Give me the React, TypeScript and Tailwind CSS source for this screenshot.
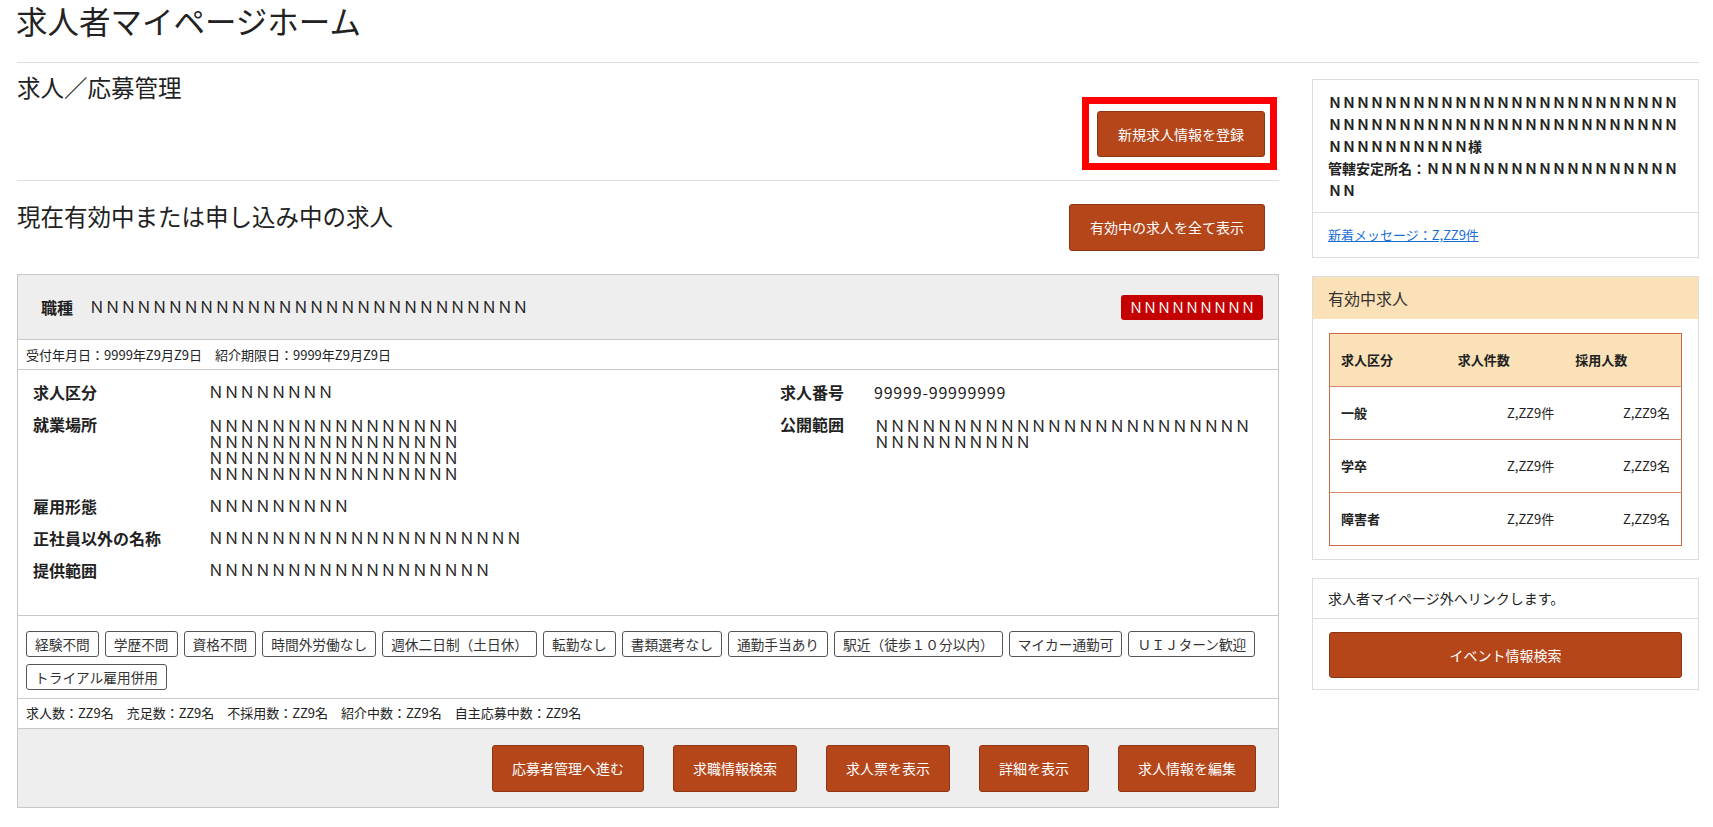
const N = (n: number) => 'Ｎ'.repeat(n);

const btn =
  'inline-flex items-center justify-center rounded-[3px] border border-[#8e3514] bg-[#b4461a] px-[19px] text-[14px] text-white';

const tags = [
  '経験不問',
  '学歴不問',
  '資格不問',
  '時間外労働なし',
  '週休二日制（土日休）',
  '転勤なし',
  '書類選考なし',
  '通勤手当あり',
  '駅近（徒歩１０分以内）',
  'マイカー通勤可',
  'ＵＩＪターン歓迎',
  'トライアル雇用併用',
];

const footerButtons = ['応募者管理へ進む', '求職情報検索', '求人票を表示', '詳細を表示', '求人情報を編集'];

const summary = [
  { kind: '一般', count: 'Z,ZZ9件', hired: 'Z,ZZ9名' },
  { kind: '学卒', count: 'Z,ZZ9件', hired: 'Z,ZZ9名' },
  { kind: '障害者', count: 'Z,ZZ9件', hired: 'Z,ZZ9名' },
];

const App = () => {
  return (
    <div className="min-h-screen bg-white pb-[12px] pl-[17px] pr-[14px] font-['Noto_Sans_CJK_JP',sans-serif] text-[#333]">
      <h1 className="-ml-[1px] text-[31.5px] leading-[40px] text-[#222]">求人者マイページホーム</h1>
      <div className="mt-[22px] border-t border-[#ddd]" />

      <div className="flex gap-[33px]">
        {/* MAIN */}
        <main className="w-[1262px] shrink-0">
          <h2 className="mt-[8px] text-[23.5px] leading-[32px] text-[#222]">求人／応募管理</h2>
          <div className="mt-[8px] flex justify-end pr-[14px]">
            <div className="relative">
              <button className={btn + ' h-[46px] px-[20px]'}>新規求人情報を登録</button>
              <div className="pointer-events-none absolute -bottom-[13px] -left-[15px] -right-[12px] -top-[14px] border-[7px] border-[#ff0000]" />
            </div>
          </div>
          <div className="mt-[23px] border-t border-[#ddd]" />

          <div className="mt-[19px] flex items-start justify-between pr-[14px]">
            <h2 className="text-[23.5px] leading-[32px] text-[#222]">現在有効中または申し込み中の求人</h2>
            <button className={btn + ' mt-[4px] h-[47px] px-[20px]'}>有効中の求人を全て表示</button>
          </div>

          {/* JOB CARD */}
          <div className="mt-[23px] border border-[#c8c8c8]">
            <div className="flex h-[65px] items-center justify-between border-b border-[#c8c8c8] bg-[#eeeeee] pl-[23px] pr-[15px]">
              <div className="flex items-center">
                <span className="text-[16px] font-bold text-[#222]">職種</span>
                <span className="ml-[16px] text-[15.7px] text-[#222]">{N(28)}</span>
              </div>
              <span className="flex h-[25px] items-center rounded-[3px] bg-[#c40000] px-[8px] text-[14px] text-white">
                {N(9)}
              </span>
            </div>

            <div className="flex h-[30px] items-center border-b border-[#c8c8c8] pl-[8px] text-[13px] text-[#222]">
              受付年月日：9999年Z9月Z9日　紹介期限日：9999年Z9月Z9日
            </div>

            <div className="grid grid-cols-[175px_572px_94px_1fr] gap-y-[10px] border-b border-[#c8c8c8] pb-[34px] pl-[15px] pr-[15px] pt-[11px] text-[15.7px] leading-[22px] text-[#222]">
              <div className="text-[16px] font-bold">求人区分</div>
              <div>{N(8)}</div>
              <div className="text-[16px] font-bold">求人番号</div>
              <div className="text-[16px] tracking-[0.8px]">99999-99999999</div>

              <div className="text-[16px] font-bold">就業場所</div>
              <div className="pb-[3px] pt-[5px] leading-[16px]">
                <div>{N(16)}</div>
                <div>{N(16)}</div>
                <div>{N(16)}</div>
                <div>{N(16)}</div>
              </div>
              <div className="text-[16px] font-bold">公開範囲</div>
              <div className="pt-[5px] leading-[16px]">{N(34)}</div>

              <div className="text-[16px] font-bold">雇用形態</div>
              <div className="col-span-3">{N(9)}</div>

              <div className="text-[16px] font-bold">正社員以外の名称</div>
              <div className="col-span-3">{N(20)}</div>

              <div className="text-[16px] font-bold">提供範囲</div>
              <div className="col-span-3">{N(18)}</div>
            </div>

            <div className="flex flex-wrap gap-x-[6px] gap-y-[7px] border-b border-[#c8c8c8] px-[8px] pb-[8px] pt-[15px]">
              {tags.map((t) => (
                <span
                  key={t}
                  className="rounded-[3px] border border-[#555] px-[8px] py-[4px] text-[13.7px] leading-[16px] text-[#333]"
                >
                  {t}
                </span>
              ))}
            </div>

            <div className="flex h-[30px] items-center border-b border-[#c8c8c8] pb-[2px] pl-[8px] text-[13px] text-[#222]">
              求人数：ZZ9名　充足数：ZZ9名　不採用数：ZZ9名　紹介中数：ZZ9名　自主応募中数：ZZ9名
            </div>

            <div className="flex justify-end gap-[29px] bg-[#eeeeee] pb-[15px] pr-[22px] pt-[16px]">
              {footerButtons.map((b) => (
                <button key={b} className={btn + ' h-[47px]'}>
                  {b}
                </button>
              ))}
            </div>
          </div>
        </main>

        {/* SIDEBAR */}
        <aside className="w-[387px] shrink-0">
          <div className="mt-[16px] border border-[#ddd]">
            <div className="border-b border-[#ddd] px-[15px] pb-[11px] pt-[11px] text-[14px] font-bold leading-[22px] text-[#222]">
              <div>{N(60)}様</div>
              <div>管轄安定所名：{N(20)}</div>
            </div>
            <div className="flex h-[44px] items-center px-[15px]">
              <a href="#" className="text-[13px] text-[#1a6fd6] underline">
                新着メッセージ：Z,ZZ9件
              </a>
            </div>
          </div>

          <div className="mt-[18px] border border-[#ddd]">
            <div className="flex h-[42px] items-center bg-[#fbe1b7] px-[15px] text-[16px] text-[#333]">有効中求人</div>
            <div className="px-[16px] pb-[13px] pt-[14px]">
              <table className="w-full table-fixed border-collapse border border-[#c76a45] text-[13px] text-[#222]">
                <thead>
                  <tr className="h-[53px] bg-[#fbe1b7]">
                    <th className="px-[11px] text-left font-bold">求人区分</th>
                    <th className="px-[11px] text-left font-bold">求人件数</th>
                    <th className="px-[11px] text-left font-bold">採用人数</th>
                  </tr>
                </thead>
                <tbody>
                  {summary.map((r) => (
                    <tr key={r.kind} className="h-[53px] border-t border-[#d48b6d]">
                      <td className="px-[11px] font-bold">{r.kind}</td>
                      <td className="px-[10px] text-right">{r.count}</td>
                      <td className="px-[11px] text-right">{r.hired}</td>
                    </tr>
                  ))}
                </tbody>
              </table>
            </div>
          </div>

          <div className="mt-[18px] border border-[#ddd]">
            <div className="flex h-[40px] items-center border-b border-[#ddd] px-[15px] text-[14px] text-[#222]">
              求人者マイページ外へリンクします。
            </div>
            <div className="px-[16px] pb-[11px] pt-[13px]">
              <button className={btn + ' h-[46px] w-full'}>イベント情報検索</button>
            </div>
          </div>
        </aside>
      </div>
    </div>
  );
};

export default App;
